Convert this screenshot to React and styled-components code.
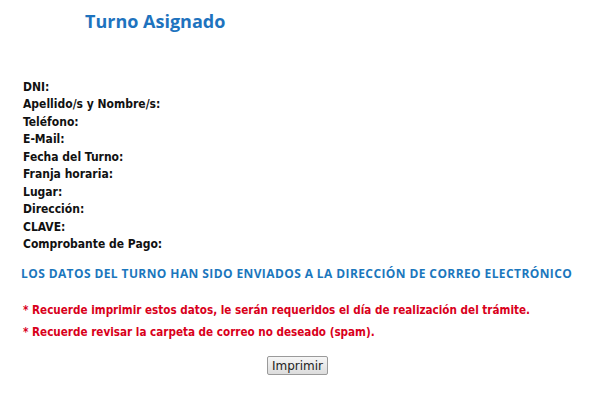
import React from 'react'
import styled, { createGlobalStyle } from 'styled-components'

const GlobalStyle = createGlobalStyle`
  body {
    margin: 0;
    background: #fff;
  }
`

const fields = [
  'DNI:',
  'Apellido/s y Nombre/s:',
  'Teléfono:',
  'E-Mail:',
  'Fecha del Turno:',
  'Franja horaria:',
  'Lugar:',
  'Dirección:',
  'CLAVE:',
  'Comprobante de Pago:',
]

const App = () => {
  return (
    <Page>
      <GlobalStyle />
      <Title>Turno Asignado</Title>
      <DataList>
        {fields.map((f) => (
          <Row key={f}>
            <Label>{f}</Label>
          </Row>
        ))}
      </DataList>
      <Notice>LOS DATOS DEL TURNO HAN SIDO ENVIADOS A LA DIRECCIÓN DE CORREO ELECTRÓNICO</Notice>
      <Warnings>
        <Warning>* Recuerde imprimir estos datos, le serán requeridos el día de realización del trámite.</Warning>
        <Warning>* Recuerde revisar la carpeta de correo no deseado (spam).</Warning>
      </Warnings>
      <Actions>
        <PrintButton type="button">Imprimir</PrintButton>
      </Actions>
    </Page>
  )
}

const Page = styled.div`
  width: 600px;
  height: 394px;
  padding: 10px 0 0 0;
  box-sizing: border-box;
  font-family: Tahoma, 'DejaVu Sans', sans-serif;
`

const Title = styled.h2`
  margin: 0 0 0 85px;
  font-family: 'Open Sans', sans-serif;
  font-size: 18px;
  font-weight: 700;
  color: #1e73be;
  line-height: 22px;
`

const DataList = styled.div`
  margin: 46px 0 0 23px;
  display: flex;
  flex-direction: column;
`

const Row = styled.div`
  display: flex;
  height: 17.5px;
  align-items: center;
`

const Label = styled.span`
  font-family: 'DejaVu Sans Condensed', 'DejaVu Sans', sans-serif;
  font-weight: 700;
  font-size: 12px;
  color: #111;
`

const Notice = styled.p`
  margin: 12px 0 0 21px;
  font-family: 'Open Sans', sans-serif;
  font-weight: 700;
  font-size: 12px;
  letter-spacing: 0.4px;
  white-space: nowrap;
  color: #1b77bd;
`

const Warnings = styled.div`
  margin: 21px 0 0 23px;
  display: flex;
  flex-direction: column;
  gap: 8px;
`

const Warning = styled.span`
  font-family: 'DejaVu Sans Condensed', 'DejaVu Sans', sans-serif;
  font-weight: 700;
  font-size: 11.6px;
  color: #d9001b;
`

const Actions = styled.div`
  display: flex;
  justify-content: center;
  margin-top: 17px;
  padding-right: 5px;
`

const PrintButton = styled.button`
  width: 61px;
  height: 19px;
  padding: 0;
  font-family: 'DejaVu Sans', sans-serif;
  font-size: 12px;
  color: #222;
  background: linear-gradient(#f6f6f6, #dcdcdc);
  border: 1px solid #9a9a9a;
  border-radius: 2px;
`

export default App
